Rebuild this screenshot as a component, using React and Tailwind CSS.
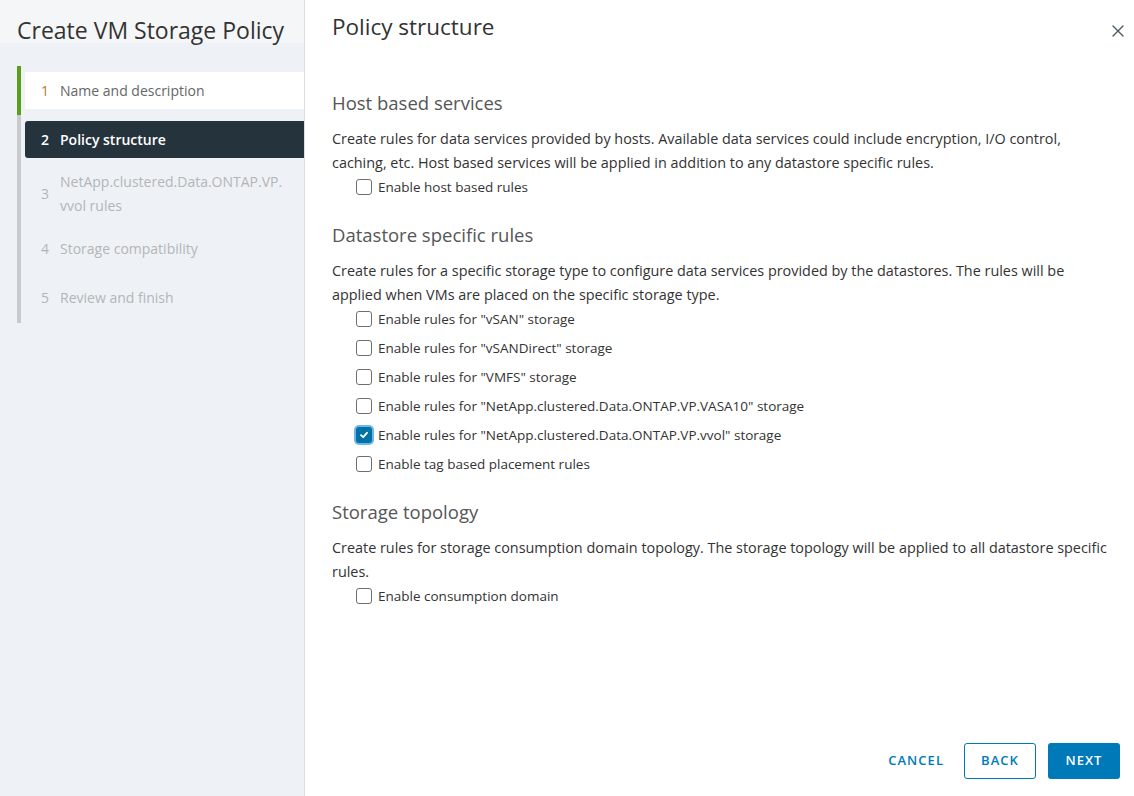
import React, { useState } from 'react';

const steps = [
  { n: 1, label: 'Name and description', state: 'done' },
  { n: 2, label: 'Policy structure', state: 'active' },
  { n: 3, label: ['NetApp.clustered.Data.ONTAP.VP.', 'vvol rules'], state: 'todo' },
  { n: 4, label: 'Storage compatibility', state: 'todo' },
  { n: 5, label: 'Review and finish', state: 'todo' },
];

function Checkbox({ checked, onChange, label }) {
  return (
    <label className="flex h-6 cursor-pointer items-center pl-6">
      <span
        onClick={onChange}
        className={
          checked
            ? 'flex h-4 w-4 items-center justify-center rounded-[3px] bg-[#0072a3] ring-2 ring-[#6db7ec]'
            : 'h-4 w-4 rounded-[3px] border border-[#6f6f6f] bg-white'
        }
      >
        {checked && (
          <svg width="10" height="10" viewBox="0 0 10 10">
            <path d="M2 5.2 L4.2 7.2 L8 2.8" fill="none" stroke="white" strokeWidth="1.8" strokeLinecap="round" strokeLinejoin="round" />
          </svg>
        )}
      </span>
      <span className="ml-1.5 text-[13.5px] text-[#333]">{label}</span>
    </label>
  );
}

function Section({ title, text, children, first }) {
  return (
    <div className={first ? 'mt-[52px]' : 'mt-6'}>
      <h2 className="text-[18.5px] leading-6 text-[#565656]">{title}</h2>
      <p className="mt-3 max-w-[780px] text-[14.4px] leading-6 text-[#333]">{text}</p>
      <div className="flex flex-col gap-[5px]">{children}</div>
    </div>
  );
}

export default function App() {
  const [checks, setChecks] = useState({
    host: false,
    vsan: false,
    vsandirect: false,
    vmfs: false,
    vasa10: false,
    vvol: true,
    tag: false,
    domain: false,
  });
  const toggle = (k) => setChecks((c) => ({ ...c, [k]: !c[k] }));

  return (
    <div className="flex h-[796px] w-full overflow-hidden bg-white" style={{ fontFamily: '"Open Sans", "Noto Sans", sans-serif' }}>
      {/* wizard steps */}
      <aside className="flex w-[305px] shrink-0 flex-col border-r border-[#dcdcdc] bg-[#eef2f6]">
        <div className="h-[43px] bg-[#f5f6f7] pl-[17px] pt-[18px]">
          <h1 className="text-[23px] leading-6 text-[#333]">Create VM Storage Policy</h1>
        </div>
        <div className="mt-[23px] flex pl-[17px]">
          <div className="flex w-1 flex-col">
            <div className="h-[49px] bg-[#5a9e1c]" />
            <div className="flex-1 bg-[#c7cbce]" />
          </div>
          <ul className="ml-1 flex flex-1 flex-col gap-3 pb-[7px] pt-[6px]">
            {steps.map((s) => {
              const base = 'flex items-center pl-4 text-[14px] leading-6';
              const cls =
                s.state === 'active'
                  ? 'h-[37px] rounded-l-[3px] bg-[#25333d] font-semibold text-white'
                  : s.state === 'done'
                  ? 'h-[37px] bg-white text-[#666]'
                  : Array.isArray(s.label)
                  ? 'h-12 text-[#b3b6b8]'
                  : 'h-[37px] text-[#b3b6b8]';
              return (
                <li key={s.n} className={`${base} ${cls}`}>
                  <span className={`w-[19px] ${s.state === 'done' ? 'text-[#b07a3c]' : ''}`}>{s.n}</span>
                  <span>
                    {Array.isArray(s.label) ? s.label.map((l) => <span key={l} className="block">{l}</span>) : s.label}
                  </span>
                </li>
              );
            })}
          </ul>
        </div>
      </aside>

      {/* main content */}
      <main className="flex flex-1 flex-col pl-[27px] pr-[14px]">
        <div className="flex items-start justify-between pt-[15px]">
          <h1 className="text-[22.5px] leading-6 text-[#333]">Policy structure</h1>
          <button className="-mr-[6px] mt-[8px] p-0.5 text-[#4a5a64]">
            <svg width="12" height="12" viewBox="0 0 12 12">
              <path d="M1 1 L11 11 M11 1 L1 11" stroke="currentColor" strokeWidth="1.4" strokeLinecap="round" />
            </svg>
          </button>
        </div>

        <div className="flex-1 text-[#333]">
          <Section
            first
            title="Host based services"
            text="Create rules for data services provided by hosts. Available data services could include encryption, I/O control, caching, etc. Host based services will be applied in addition to any datastore specific rules."
          >
            <Checkbox checked={checks.host} onChange={() => toggle('host')} label="Enable host based rules" />
          </Section>
          <Section
            title="Datastore specific rules"
            text="Create rules for a specific storage type to configure data services provided by the datastores. The rules will be applied when VMs are placed on the specific storage type."
          >
            <Checkbox checked={checks.vsan} onChange={() => toggle('vsan')} label={'Enable rules for "vSAN" storage'} />
            <Checkbox checked={checks.vsandirect} onChange={() => toggle('vsandirect')} label={'Enable rules for "vSANDirect" storage'} />
            <Checkbox checked={checks.vmfs} onChange={() => toggle('vmfs')} label={'Enable rules for "VMFS" storage'} />
            <Checkbox checked={checks.vasa10} onChange={() => toggle('vasa10')} label={'Enable rules for "NetApp.clustered.Data.ONTAP.VP.VASA10" storage'} />
            <Checkbox checked={checks.vvol} onChange={() => toggle('vvol')} label={'Enable rules for "NetApp.clustered.Data.ONTAP.VP.vvol" storage'} />
            <Checkbox checked={checks.tag} onChange={() => toggle('tag')} label="Enable tag based placement rules" />
          </Section>
          <Section
            title="Storage topology"
            text="Create rules for storage consumption domain topology. The storage topology will be applied to all datastore specific rules."
          >
            <Checkbox checked={checks.domain} onChange={() => toggle('domain')} label="Enable consumption domain" />
          </Section>
        </div>

        <div className="flex items-center justify-end gap-3 pb-[17px]">
          <button className="h-9 px-2 text-[13px] font-semibold tracking-[0.08em] text-[#0079b8]">CANCEL</button>
          <button className="h-9 w-[72px] rounded-[3px] border border-[#0079b8] text-[13px] font-semibold tracking-[0.08em] text-[#0079b8]">BACK</button>
          <button className="h-9 w-[72px] rounded-[3px] bg-[#0079b8] text-[13px] font-semibold tracking-[0.08em] text-white">NEXT</button>
        </div>
      </main>
    </div>
  );
}
